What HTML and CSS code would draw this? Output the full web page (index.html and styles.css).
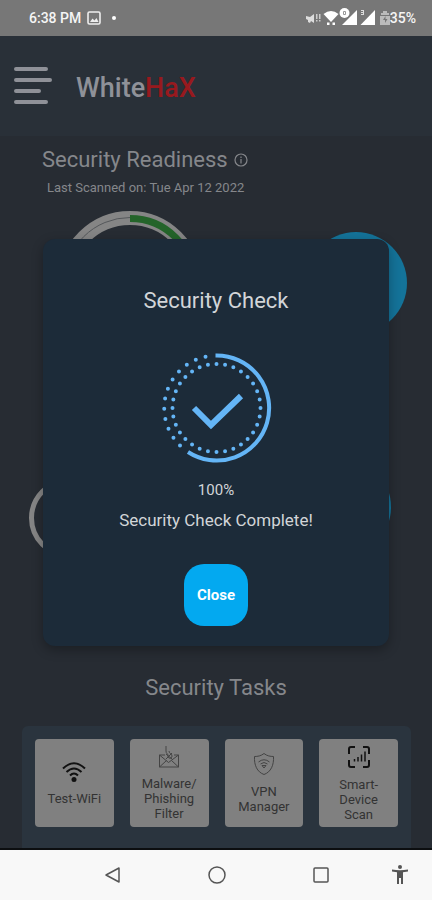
FILE: index.html
```
<!DOCTYPE html>
<html lang="en">
<head>
    <meta charset="UTF-8">
    <meta name="viewport" content="width=device-width, initial-scale=1.0">
    <title>WhiteHaX</title>
    <link rel="stylesheet" href="styles.css">
</head>
<body>
    <div class="status-bar">
        <div class="status-left">
            <span>6:38 PM</span>
            <svg width="14" height="14" viewBox="0 0 14 14"><rect x="1" y="1" width="12" height="12" rx="1.5" fill="none" stroke="#eee" stroke-width="1.6"/><path d="M3 11l2.5-3.5 2 2L9.500 7 11.500 11z" fill="#eee"/></svg>
            <span class="status-dot"></span>
        </div>
        <div class="status-right">
            <svg width="84" height="20" viewBox="0 0 84 20">
                <g fill="#fff">
                    <path d="M0 8l4 1 4-3v9l-3-2-1 2-2-1v-2l-2-1z" fill="#ddd"/>
                    <path d="M10 6h1.500v5H10zM10 12h1.500v1.500H10zM13 6h1.500v5H13zM13 12h1.500v1.500H13z" fill="#ccc"/>
                    <path d="M17.500 6Q25 0 32.500 6L25 14z"/>
                    <path d="M21 14.500h2.500V17H21zM26.500 14.500H29V17h-2.500z"/>
                    <path d="M36 17L51 2v15z"/>
                    <circle cx="38.500" cy="5" r="5"/>
                    <path d="M54.500 17L69 2v15z"/>
                    <path d="M55 2h3v5h-3v-1h2V5h-2V4h2V3h-2z" fill="#ddd"/>
                    <path d="M75 5h2V3h4v2h2v2h-8zM74 8h10v9H74z" fill="#bbb"/>
                    <path d="M79.500 8l-2.500 4h2v3l2.500-4h-2z" fill="#777"/>
                </g>
                <path d="M37.500 3.500h2v3h-2z" fill="none" stroke="#999"/>
            </svg>
            <span>35%</span>
        </div>
    </div>

    <div class="app">
        <header class="header">
            <button class="menu-button" aria-label="Menu">
                <svg width="38" height="38" viewBox="0 0 38 38" stroke="#8f9198" stroke-width="4" stroke-linecap="round"><path d="M2 2h30M2 13h34M2 24h23M2 35h30"/></svg>
            </button>
            <div class="brand">White<span class="brand-red">HaX</span></div>
        </header>

        <main class="main">
            <h2 class="title">Security Readiness
                <svg width="14" height="14" viewBox="0 0 14 14" fill="none" stroke="#85878b" stroke-width="1.2"><circle cx="7" cy="7" r="6"/><path d="M7 6v4.500M7 3.500V5"/></svg>
            </h2>
            <p class="scanned">Last Scanned on: Tue Apr 12 2022</p>

            <div class="gauges gauges-top">
                <svg width="144" height="144" viewBox="0 0 144 144" fill="none">
                    <circle cx="72" cy="72" r="65" stroke="#858585" stroke-width="14"/>
                    <path d="M72 6.500A65.500 65.500 0 0 0 6.500 72" stroke="#55585b"/>
                    <path d="M72 7.500A64.500 64.500 0 0 1 136.500 72" stroke="#24642a" stroke-width="7"/>
                </svg>
                <div class="score"></div>
            </div>
            <div class="gauges gauges-bottom">
                <svg width="80" height="80" viewBox="0 0 80 80" fill="none"><circle cx="40" cy="40" r="37.500" stroke="#858585" stroke-width="5"/></svg>
                <div class="score"></div>
            </div>

            <h2 class="tasks-title">Security Tasks</h2>
            <div class="tasks">
                <button class="task">
                    <svg width="24" height="22" viewBox="0 0 24 22" fill="none" stroke="#111" stroke-width="2"><path d="M1 7.500Q12-3 23 7.500M4.500 11Q12 4 19.500 11M8 14.500Q12 10.500 16 14.500"/><circle cx="12" cy="18.500" r="2.500" fill="#111" stroke="none"/></svg>
                    <span>Test-WiFi</span>
                </button>
                <button class="task">
                    <svg width="22" height="22" viewBox="0 0 22 22" fill="none" stroke="#444"><path d="M7 9H1.500v12h19V9H16M1.500 9l9 7.500 10-7.500M1.500 21l7-6.500M20.500 21l-7-6.500M8 0v5c0 3 2 2 2 5s4 3 4 0-3-2-3-5M8 8l6 5M14 7l-6 6"/></svg>
                    <span>Malware/<br>Phishing<br>Filter</span>
                </button>
                <button class="task">
                    <svg width="22" height="24" viewBox="0 0 22 24" fill="none" stroke="#444"><path d="M11 1.500C8 4 4.500 4.500 1.500 4.500 1 13 4 20 11 22.500 18 20 21 13 20.500 4.500c-3 0-6.500-.5-9.500-3z"/><path d="M5.500 10Q11 5.500 16.500 10M7.500 12Q11 9 14.500 12M9 13.500h4L11 16z"/></svg>
                    <span>VPN<br>Manager</span>
                </button>
                <button class="task">
                    <svg width="24" height="24" viewBox="0 0 24 24" fill="none" stroke="#111" stroke-width="2"><path d="M8 2H4Q2 2 2 4v5M16 2h4q2 0 2 2v5M8 22H4q-2 0-2-2v-5M16 22h4q2 0 2-2v-5"/><path d="M7.500 14v2.500M11 12v4.500M14.500 9.500v7M18 6.500v10" stroke-width="1.500"/></svg>
                    <span>Smart-<br>Device<br>Scan</span>
                </button>
            </div>
        </main>

        <div class="overlay">
            <div class="dialog" role="dialog" aria-labelledby="dialogTitle">
                <h2 class="dialog-title" id="dialogTitle">Security Check</h2>
                <svg class="check" width="112" height="112" viewBox="0 0 112 112" fill="none" stroke="#64b5f6">
                    <path d="M55.500 3.500h1A52.500 52.500 0 1 1 28 100" stroke-width="4"/>
                    <path d="M56.500 12a44 44 0 0 1 0 88a44 44 0 0 1 0-88" stroke-width="4" stroke-linecap="round" pathLength="320" stroke-dasharray="0 10"/>
                    <path d="M20 93.500A52.500 52.500 0 0 1 46.500 4.500" stroke-width="4" stroke-linecap="round" pathLength="111" stroke-dasharray="0 10"/>
                    <path d="M34 56l17 17L81 44" stroke-width="6"/>
                </svg>
                <p class="percent">100%</p>
                <p class="message">Security Check Complete!</p>
                <button class="close-button">Close</button>
            </div>
        </div>
    </div>

    <nav class="nav-bar">
        <button class="nav-button" aria-label="Back"><svg width="18" height="18" viewBox="0 0 18 18" fill="none" stroke="#555" stroke-width="1.500" stroke-linejoin="round"><path d="M15 2v14L2 9z"/></svg></button>
        <button class="nav-button" aria-label="Home"><svg width="18" height="18" viewBox="0 0 18 18" fill="none" stroke="#555" stroke-width="1.500"><circle cx="9" cy="9" r="8"/></svg></button>
        <button class="nav-button" aria-label="Recent apps"><svg width="18" height="18" viewBox="0 0 18 18" fill="none" stroke="#555" stroke-width="1.500"><rect x="2" y="2" width="14" height="14" rx="1"/></svg></button>
        <button class="nav-button nav-access" aria-label="Accessibility"><svg width="18" height="20" viewBox="0 0 18 20" fill="#555"><circle cx="9" cy="2" r="2"/><path d="M1 4.500q8 1.500 16 0v2l-5 .7V19h-2v-6H8v6H6V7.200L1 6.500z"/></svg></button>
    </nav>
</body>
</html>
```
FILE: styles.css
```
* {
    box-sizing: border-box;
}
body {
    font-family: Roboto, sans-serif;
    margin: 0;
    min-height: 100vh;
    display: flex;
    flex-direction: column;
    background-color: #272c33;
}
h2, p {
    margin: 0;
    font-weight: 400;
}
button {
    font-family: inherit;
    border: none;
    padding: 0;
    cursor: pointer;
}
svg {
    display: block;
    flex-shrink: 0;
}
.status-bar {
    height: 36px;
    padding: 0 16px 0 29px;
    display: flex;
    align-items: center;
    justify-content: space-between;
    background-color: #777;
    color: #f5f5f5;
    font-size: 14px;
    font-weight: 500;
}
.status-left, .status-right {
    display: flex;
    align-items: center;
}
.status-left {
    gap: 6px;
}
.status-dot {
    width: 4px;
    height: 4px;
    margin-left: 5px;
    border-radius: 50%;
    background-color: #fff;
}
.app {
    position: relative;
    flex: 1;
    display: flex;
    flex-direction: column;
    border-bottom: 2px solid #0c0e10;
}
.header {
    height: 100px;
    padding: 0 14px;
    display: flex;
    align-items: center;
    gap: 24px;
    background-color: #293038;
}
.menu-button {
    background: none;
}
.brand {
    padding-top: 4px;
    color: #8f9198;
    font-size: 27px;
    font-weight: 500;
}
.brand-red {
    color: #98191e;
}
.main {
    flex: 1;
    display: flex;
    flex-direction: column;
    padding-top: 10px;
    color: #85878b;
}
.title {
    display: flex;
    align-items: center;
    gap: 6px;
    padding-left: 42px;
    font-size: 22px;
    line-height: 28px;
}
.scanned {
    padding: 4px 0 13px 47px;
    font-size: 13px;
    line-height: 20px;
}
.gauges {
    display: flex;
    justify-content: space-between;
}
.gauges-top {
    align-items: center;
    padding: 0 25px 0 58px;
}
.gauges-bottom {
    align-items: flex-end;
    padding: 101px 41px 116px 29px;
}
.score {
    width: 102px;
    height: 102px;
    border-radius: 50%;
    background-color: #147399;
}
.tasks-title {
    font-size: 22px;
    line-height: 28px;
    text-align: center;
}
.tasks {
    flex: 1;
    margin: 24px 21px 0 22px;
    padding: 13px 13px 20px;
    display: grid;
    grid-template-columns: repeat(4, 1fr);
    gap: 16px;
    border-radius: 6px 6px 0 0;
    background-color: #2a343e;
}
.task {
    height: 88px;
    display: flex;
    flex-direction: column;
    align-items: center;
    justify-content: center;
    gap: 8px;
    border-radius: 4px;
    background-color: #808080;
    color: #333;
    font-size: 13px;
    line-height: 15px;
}
.overlay {
    position: absolute;
    inset: 0;
    display: flex;
    align-items: center;
    justify-content: center;
}
.dialog {
    width: 80%;
    padding: 47px 20px 20px;
    display: flex;
    flex-direction: column;
    align-items: center;
    border-radius: 12px;
    background-color: #1c2b39;
    box-shadow: 0 4px 12px rgba(0, 0, 0, 0.3);
    color: #d2d5d8;
}
.dialog-title {
    font-size: 22px;
    line-height: 30px;
}
.check {
    margin: 36px 0 16px;
}
.percent {
    font-size: 15px;
    line-height: 20px;
}
.message {
    margin: 8px 0 32px;
    font-size: 17px;
    line-height: 24px;
}
.close-button {
    width: 64px;
    height: 62px;
    border-radius: 20px;
    background-color: #03a9f0;
    color: #fff;
    font-size: 15px;
    font-weight: 700;
}
.nav-bar {
    height: 50px;
    display: flex;
    align-items: center;
    gap: 86px;
    padding: 0 24px 0 104px;
    background-color: #f8f8f8;
}
.nav-button {
    background: none;
}
.nav-access {
    margin-left: -25px;
}
```
